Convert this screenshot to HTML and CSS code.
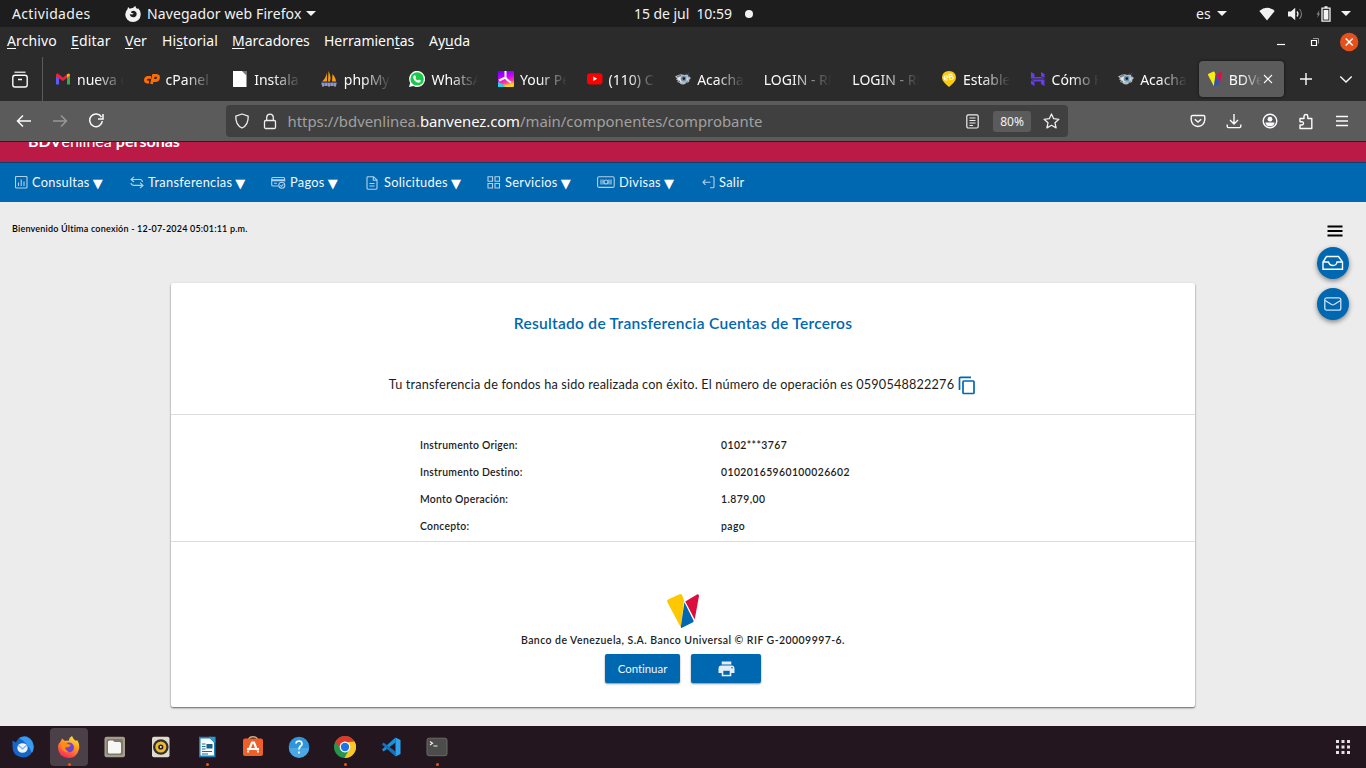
FILE: index.html
```html
<!DOCTYPE html>
<html lang="es">
<head>
<meta charset="utf-8">
<title>BDVenlínea personas</title>
<link rel="stylesheet" href="styles.css">
</head>
<body>
<svg class="defs" width="0" height="0">
  <symbol id="i-eye" viewBox="0 0 16 16">
    <path d="M0 5.500L3 4l3-.8L10 4l2-1 1.500 2L16 7l-1.500 1.500L14 11l-2.500 1L9 13.500l-3-.3-2-1.700-2-.5 1-1.500-2-1 1-1z" fill="#b4bbc1"/>
    <path d="M2.500 7.500Q8 3.500 13.500 8 9 12 5 10.500z" fill="#e8edf0"/>
    <circle cx="8.600" cy="7.800" r="3" fill="#6d93ae"/><circle cx="8.800" cy="7.600" r="1.300" fill="#111827"/>
    <path d="M2 5.500l4-1M3 11l2-1M10.500 12l2-1.500" stroke="#596066" stroke-width=".9"/>
    <path d="M11 2l1 2M14 1.500l-1 2.500M15 4.500l-1.500 1" stroke="#37417e" stroke-width="1"/>
  </symbol>
  <symbol id="i-bdv" viewBox="0 0 34 36">
    <path d="M1 8.500Q1 7 2.500 6.200L13.500 1.200Q15 .7 16 2L18 7.500 15 33.500 14 33z" fill="var(--a)"/>
    <path d="M18.400 9.200L27.500 27.500Q28 28.500 27 29.300L15.500 35q-.7 0-.7-1z" fill="var(--b)"/>
    <path d="M19.300 8.500L31 1.400Q33 .8 33 3L28.700 26.500z" fill="var(--c)"/>
  </symbol>
</svg>

<header class="sysbar">
  <span class="sys-act">Actividades</span>
  <svg class="sys-ff" width="16" height="16" viewBox="0 0 16 16"><path d="M2.500 3.200L3 1l1.800 1.800Q6.500 1.800 8 2 9 .3 10.500 0 10.300 1.800 12.300 3l.8-.7Q16 5 15.700 8.800A7.700 7.300 0 0 1 .3 8.500Q.2 5.200 2.500 3.200z" fill="#f2f2f2"/><path d="M6.500 5.200Q9.800 4 11.400 6.500 12.500 10 9.200 11.200 5.400 11.600 4.700 8.200L7.500 8.500 8.600 7.400 6 6.700z" fill="#1d1d1d"/></svg>
  <span class="sys-app">Navegador web Firefox</span><i class="tri"></i>
  <span class="sys-date">15 de jul&nbsp; 10:59</span><i class="dot"></i>
  <span class="sys-lang">es</span><i class="tri"></i>
  <svg class="sys-wifi" width="16" height="14" viewBox="0 0 16 14"><path d="M8 13.500L.3 4Q8-2.300 15.700 4z" fill="#f2f2f2"/></svg>
  <svg class="sys-vol" width="15" height="14" viewBox="0 0 15 14"><path d="M0 4.500h3L7.200.7v12.600L3 9.500H0z" fill="#f2f2f2"/><path d="M9 4.500q2 2.500 0 5" fill="none" stroke="#eee" stroke-width="1.300"/><path d="M11.500 2q4 5 0 10" fill="none" stroke="#777" stroke-width="1.200"/></svg>
  <svg class="sys-bat" width="15" height="16" viewBox="0 0 15 16"><path d="M3.500 4L.6 8.500H2L1.300 12 4 7.500H2.700z" fill="#888"/><path d="M6 2.200h8v13H6zM8.500 .9h3" fill="none" stroke="#f2f2f2" stroke-width="1.300"/><path d="M7.600 3.900h4.800v9.700H7.600z" fill="#f2f2f2"/></svg>
  <i class="tri"></i>
</header>

<nav class="menubar">
  <span class="mb1"><u>A</u>rchivo</span><span class="mb2"><u>E</u>ditar</span><span class="mb3"><u>V</u>er</span><span class="mb4">Hi<u>s</u>torial</span><span class="mb5"><u>M</u>arcadores</span><span class="mb6">Herramien<u>t</u>as</span><span>Ay<u>u</u>da</span>
  <svg class="winctl" width="90" height="20" viewBox="0 0 90 20"><path d="M4 12.500h8" stroke="#fff" stroke-width="1.200"/><path d="M40 6.500h5.500v5" fill="none" stroke="#999"/><path d="M38.500 8.500h5v5h-5z" fill="none" stroke="#fff" stroke-width="1.200"/><circle cx="76.200" cy="10" r="9.200" fill="#e6501b"/><path d="M72.700 6.500l7 7m0-7l-7 7" stroke="#fff" stroke-width="1.500"/></svg>
</nav>

<div class="tabs">
  <div class="tabview"><svg width="18" height="18" viewBox="0 0 18 18" fill="none" stroke="#fbfbfe" stroke-width="1.400"><path d="M3.500 1.200h11" stroke-width="1.200"/><path d="M4 4.200h10q2.200 0 2.200 2.200v7.400q0 2.200-2.200 2.200H4q-2.200 0-2.200-2.200V6.400Q1.800 4.200 4 4.200zM7 8.500h4" /></svg></div>
  <div class="tab"><svg width="16" height="16" viewBox="0 0 16 16"><path d="M1 4.500v9h3V7z" fill="#5b5bf5"/><path d="M12 7v6.500h3v-9z" fill="#34a853"/><path d="M1 4Q1 2 3 2.500L8 6.500 12 3.200V7L8 10 1 5.500z" fill="#ea2335"/><path d="M12 3.200q3-1.700 3 1.300L12 7z" fill="#fbbc04"/></svg><span>nueva c</span></div>
  <div class="tab"><svg width="16" height="16" viewBox="0 0 16 16" fill="none" stroke="#ff6c00" stroke-width="2.800"><path d="M7 6.300H4.200Q1.500 6.500 1.400 9q0 2 2.200 2H5M7.500 13l2-8.700h2.800q2.500.4 2.200 2.500-.3 2.400-2.600 2.700H9"/></svg><span>cPanel</span></div>
  <div class="tab"><svg width="16" height="16" viewBox="0 0 16 16"><path d="M1 0h9.500l4 4v12H1z" fill="#fff"/><path d="M10 0h5v5z" fill="#777"/></svg><span>Instala</span></div>
  <div class="tab"><svg width="17" height="16" viewBox="0 0 17 16"><path d="M6 1.500Q5 7 1 10.500h5zM7.500 0q3 6 1.500 10.500H7zM11.500 3q3.500 4 3.500 7.500h-4z" fill="#f89c0e"/><path d="M0 11.500h16L15 15H1z" fill="#6c78af"/><path d="M2 12v4m3-4v3m3-3v4m3-4v3m3-3v4" stroke="#c7cce4" stroke-width=".8"/></svg><span>phpMyA</span></div>
  <div class="tab"><svg width="16" height="16" viewBox="0 0 16 16"><path d="M0 16l1.200-4A8 8 0 1 1 4.300 15z" fill="#fff"/><circle cx="8.100" cy="7.900" r="6.700" fill="#18c94a"/><path d="M5 4.500l1.200-.2 1 2-.8 1Q7.300 9 9 9.600l1-1 1.900.9q0 2.300-2.300 2.300Q5.300 11 4.300 7 4 5.300 5 4.500z" fill="#fff"/></svg><span>WhatsA</span></div>
  <div class="tab"><svg width="16" height="16" viewBox="0 0 16 16"><defs><linearGradient id="g1" x1="0" y1="0" x2=".3" y2="1"><stop offset="0" stop-color="#6a00ff"/><stop offset=".45" stop-color="#c300ff"/><stop offset=".8" stop-color="#ff3c9e"/><stop offset="1" stop-color="#ffd21c"/></linearGradient></defs><rect width="16" height="16" rx="1" fill="url(#g1)"/><path d="M0 11l4 2 3 3H0z" fill="#20d5e8"/><path d="M7.500 0v6.500L1 9.500M7.500 6.500Q8 8.500 13 11.500" fill="none" stroke="#fff" stroke-width="2"/></svg><span>Your Pe</span></div>
  <div class="tab"><svg width="16" height="16" viewBox="0 0 16 16"><rect y="2.200" width="15.500" height="11.300" rx="3" fill="#f00"/><path d="M6.300 5.500v4.600L10.200 7.800z" fill="#fff"/></svg><span>(110) C</span></div>
  <div class="tab"><svg width="16" height="16"><use href="#i-eye"/></svg><span>Acacha</span></div>
  <div class="tab noicon"><span>LOGIN - RP</span></div>
  <div class="tab noicon"><span>LOGIN - RP</span></div>
  <div class="tab"><svg width="16" height="16" viewBox="0 0 16 16"><path d="M8 16Q1 10.500 1 6.500 1.300.3 8 0q6.700.3 7 6.500Q15 10.500 8 16z" fill="#ffca0a"/><g transform="rotate(-12 8 6.500)"><path d="M3 6.500h4Q7 4.200 5 4.200T3 6.500q.3 2.300 3.500 2M8.500 3.500v5.300H11q2.300-1.200 0-2.800H8.500 10.500q2-1.300 0-2.500H8" fill="none" stroke="#fff" stroke-width="1"/></g></svg><span>Estable</span></div>
  <div class="tab"><svg width="16" height="16" viewBox="0 0 16 16" fill="#673de6"><path d="M1 7.500V1l3.500 2v3H11l3.500 1.500zM11 5V1l3.500 2v4zM1 8.500h13.500V15L11 13v-2.500H4.500zM1 9.500L4.500 11v4L1 13z"/></svg><span>Cómo H</span></div>
  <div class="tab"><svg width="16" height="16"><use href="#i-eye"/></svg><span>Acacha</span></div>
  <div class="tab active"><svg class="logo-fav" width="16" height="16" viewBox="0 0 16 16"><use href="#i-bdv"/></svg><span>BDVe</span><svg class="tabx" width="10" height="10" viewBox="0 0 10 10"><path d="M1 1l8 8M9 1L1 9" stroke="#fbfbfe" stroke-width="1.100"/></svg></div>
  <svg class="newtab" width="14" height="14" viewBox="0 0 14 14"><path d="M7 1v12M1 7h12" stroke="#fbfbfe" stroke-width="1.400"/></svg>
  <svg class="alltabs" width="14" height="14" viewBox="0 0 14 14"><path d="M1.300 4.500L7 10l5.700-5.500" fill="none" stroke="#fbfbfe" stroke-width="1.400"/></svg>
</div>

<div class="toolbar">
  <svg class="nav-ic" width="90" height="16" viewBox="0 0 90 16" fill="none" stroke-width="1.500"><path d="M15 8H2M7 2.500L1.500 8 7 13.500" stroke="#fbfbfe"/><path d="M37 8h13M45 2.500L50.500 8 45 13.500" stroke="#989898"/><path d="M85.500 4.200A6.300 6.300 0 1 0 86.300 8M87 1v5h-5" stroke="#fbfbfe"/></svg>
  <div class="urlbar">
    <svg class="shield" width="16" height="16" viewBox="0 0 16 16"><path d="M8 1l6.200 2.200Q14.500 12 8 15 1.500 12 1.800 3.200z" fill="none" stroke="#eee" stroke-width="1.300" stroke-linejoin="round"/></svg>
    <svg class="lock" width="14" height="17" viewBox="0 0 14 17" fill="none" stroke="#eee" stroke-width="1.300"><rect x="1.500" y="7.500" width="11" height="8" rx="1.300"/><path d="M3.700 7V4.300Q4 1.200 7 1.200t3.300 3.100V7"/></svg>
    <span class="url">https://bdvenlinea.<b>banvenez.com</b>/main/componentes/comprobante</span>
    <svg class="reader" width="13" height="15" viewBox="0 0 13 15" fill="none" stroke="#eee" stroke-width="1.200"><rect x=".8" y=".8" width="11.400" height="13.200" rx="1.500"/><path d="M3.500 4h6M3.500 6.500h6M3.500 9h6M3.500 11.500h3.500"/></svg>
    <span class="zoom">80%</span>
    <svg width="17" height="16" viewBox="0 0 17 16"><path d="M8.500 1l2.200 4.700 5.200.6-3.900 3.500 1.100 5.100-4.600-2.600-4.600 2.600L5 9.800 1.100 6.300l5.200-.6z" fill="none" stroke="#eee" stroke-width="1.300" stroke-linejoin="round"/></svg>
  </div>
  <div class="tools">
    <svg width="16" height="16" viewBox="0 0 16 16" fill="none" stroke="#fbfbfe" stroke-width="1.400"><path d="M2.500 2.500h11q1.300 0 1.300 1.300V7Q14 13 8 13.500 2 13 1.200 7V3.800q0-1.300 1.300-1.300z"/><path d="M4.800 6.200L8 9l3.200-2.800"/></svg>
    <svg width="16" height="16" viewBox="0 0 16 16" fill="none" stroke="#fbfbfe" stroke-width="1.400"><path d="M8 1v10M4 7l4 4 4-4M1.200 11.500v1.800q0 1.300 1.300 1.300h11q1.300 0 1.300-1.300v-1.800"/></svg>
    <svg width="16" height="16" viewBox="0 0 16 16"><circle cx="8" cy="8" r="6.800" fill="none" stroke="#fbfbfe" stroke-width="1.400"/><circle cx="8" cy="6.200" r="2.400" fill="#fbfbfe"/><path d="M3.500 9.500h9q0 3.500-4.500 3.800-4.500-.3-4.500-3.800z" fill="#fbfbfe"/></svg>
    <svg width="16" height="17" viewBox="0 0 16 17" fill="none" stroke="#fbfbfe" stroke-width="1.400"><path d="M2 15.500V12h2q1.500-.2 1.500-1.700T4 8.700H2V5.500h4V3.200Q6.200 1.500 8 1.500t1.800 1.700v2.300h4v10z" stroke-linejoin="round"/></svg>
    <svg width="14" height="14" viewBox="0 0 14 14"><path d="M1 2.500h12M1 7h12M1 11.500h12" stroke="#fbfbfe" stroke-width="1.300"/></svg>
  </div>
</div>

<main class="page">
  <div class="brand"><span><b>BDV</b>enlínea <b>personas</b></span></div>
  <nav class="mainnav">
    <a class="n1"><svg width="13" height="13" viewBox="0 0 13 13"><rect x=".5" y=".5" width="11.500" height="11.500" rx="1"/><path d="M3.500 10V6.500M6.200 10V3.500M9 10V5.500"/></svg>Consultas<i>▼</i></a>
    <a class="n2"><svg width="14" height="13" viewBox="0 0 14 13"><path d="M4 .8L1 3.500 4 6M1 3.500h9.500Q12.500 4 12.500 6M10 6.700l3 2.700-3 2.600M13 9.400H3.500Q1 9 1 7"/></svg>Transferencias<i>▼</i></a>
    <a class="n3"><svg width="15" height="13" viewBox="0 0 15 13"><path d="M7.500 10H2Q.7 10 .7 8.700V3Q.7 1.500 2 1.500h10.500Q13.700 1.500 13.700 3v2.500M1 3.700h12.500M1 4.700h12.500M3 7.300h3"/><circle cx="10.800" cy="9.200" r="3"/><path d="M9.300 9.300l1.200 1 1.800-2"/></svg>Pagos<i>▼</i></a>
    <a class="n4"><svg width="12" height="14" viewBox="0 0 12 14"><path d="M1 1.500Q1 .7 2 .7h5.500L11 4v8.300q0 .9-1 .9H2q-1 0-1-.9zM7.300 1v3.300H11M3.500 7.500h5M3.500 10h5"/></svg>Solicitudes<i>▼</i></a>
    <a class="n5"><svg width="14" height="13" viewBox="0 0 14 13"><path d="M1 .7h4.500v4.500H1zM8 .7h4.500v4.500H8zM1 7.500h4.500V12H1zM8 7.500h4.500V12H8z"/></svg>Servicios<i>▼</i></a>
    <a class="n6"><svg width="18" height="13" viewBox="0 0 18 13"><rect x=".6" y=".8" width="16.600" height="10.600" rx="1.500"/><circle cx="9" cy="6" r="2"/><path d="M4 3.500v5M14 3.500v5M6 3.500v5M12 3.500v5"/></svg>Divisas<i>▼</i></a>
    <a class="n7"><svg width="13" height="13" viewBox="0 0 13 13"><path d="M8 .8h3q1 0 1 1v8.900q0 1-1 1H8M8.500 6.300H1M3.500 3.700L1 6.300l2.500 2.500"/></svg>Salir</a>
  </nav>
  <div class="welcome"><span>Bienvenido Última conexión - 12-07-2024 05:01:11 p.m.</span></div>
  <aside class="side">
    <svg class="burger" width="16" height="12" viewBox="0 0 16 12"><path d="M.5 1.500h15M.5 6h15M.5 10.500h15" stroke="#000" stroke-width="1.800"/></svg>
    <span class="fab"><svg width="22" height="16" viewBox="0 0 22 16" fill="none" stroke="#fff" stroke-width="1.400"><path d="M1 7L4.500 1.500h12L20.500 7v7.300H1zM1 7h5.500Q7.500 10.500 11 10.500T15 7h5.500"/></svg></span>
    <span class="fab"><svg width="18" height="14" viewBox="0 0 18 14" fill="none" stroke="#cfe3f2" stroke-width="1.300"><rect x=".8" y=".8" width="16" height="12.400" rx="2"/><path d="M1.200 3.500L7.500 7.500q1.300.7 2.600 0L16.500 3.500"/></svg></span>
  </aside>

  <section class="card">
    <h1>Resultado de Transferencia Cuentas de Terceros</h1>
    <p class="msg"><span>Tu transferencia de fondos ha sido realizada con éxito. El número de operación es 0590548822276</span><svg width="18" height="19" viewBox="0 0 18 19" fill="none" stroke="#0067b1" stroke-width="1.700"><path d="M1.500 14V2.300q0-1 1-1H13"/><rect x="5" y="5" width="11" height="12.500" rx=".8"/></svg></p>
    <dl class="rows">
      <dt>Instrumento Origen:</dt><dd>0102***3767</dd>
      <dt>Instrumento Destino:</dt><dd>01020165960100026602</dd>
      <dt>Monto Operación:</dt><dd>1.879,00</dd>
      <dt>Concepto:</dt><dd>pago</dd>
    </dl>
    <div class="foot">
      <svg class="logo-bdv" width="34" height="36"><use href="#i-bdv"/></svg>
      <p>Banco de Venezuela, S.A. Banco Universal © RIF G-20009997-6.</p>
      <div class="btns">
        <button class="b1">Continuar</button>
        <button class="b2"><svg width="17" height="16" viewBox="0 0 17 16"><path d="M3.700.5h9.600v3H3.700zM3 4.500h11q2.500.2 2.500 2.700V12H.5V7.200Q.5 4.700 3 4.500z" fill="#e3eef6"/><path d="M3.700 8.500h9.600v6.800H3.700z" fill="#e3eef6"/><path d="M5.300 9.800h6.400v4H5.300z" fill="#0067b1"/><circle cx="14" cy="6.800" r=".8" fill="#0067b1"/></svg></button>
      </div>
    </div>
  </section>
</main>

<footer class="dock">
  <div class="app"><svg width="24" height="24" viewBox="0 0 24 24"><path d="M1.500 5.500l3.500 2Q8 0 16 1.500q7 3 6.500 11Q21 22.500 11.500 22.500 1 21 1.500 11z" fill="#1467c8"/><path d="M8 3Q15-1 20 5t1 13Q17 8 8 3z" fill="#3a9cf0"/><ellipse cx="11.500" cy="13" rx="5.200" ry="4.800" fill="#eef5fc"/><path d="M7 10l4.500 4L16 10" fill="none" stroke="#7ab2e6" stroke-width="1.200"/></svg></div>
  <div class="app on run"><svg width="24" height="24" viewBox="0 0 24 24"><defs><linearGradient id="g2" x1=".8" y1="0" x2=".3" y2="1"><stop offset="0" stop-color="#ffe93e"/><stop offset=".45" stop-color="#ff9420"/><stop offset="1" stop-color="#ff2260"/></linearGradient></defs><path d="M4 6l1-2.500L8 6q2-.8 3.500 0Q12 2.500 15 1q1 3 4 5l1-1q3 4 2 9-2 9-10.500 9Q1 22 1 12q.5-4 3-6z" fill="url(#g2)"/><circle cx="12" cy="12.500" r="5" fill="#7045c9"/><path d="M4 8q4-2 7 1l3 1-2 2-4 .5Q9 16 13 17.500 7 18 4 13z" fill="#ff8a16"/></svg></div>
  <div class="app"><svg width="22" height="22" viewBox="0 0 22 22"><rect x=".5" y=".8" width="20.500" height="20.500" rx="2" fill="#a49d8b"/><rect x="2.500" y="3" width="16.500" height="16" rx="2" fill="#7f7969"/><path d="M4 6q0-1.500 1.500-1.500H9L10.500 6h5q1.500 0 1.500 1.500V16q0 1.500-1.500 1.500h-10Q4 17.500 4 16z" fill="#f7f7f5"/></svg></div>
  <div class="app"><svg width="20" height="22" viewBox="0 0 20 22"><rect x="1" y=".7" width="17.500" height="20.600" rx="2" fill="#dedbd2"/><circle cx="9.800" cy="11" r="7.800" fill="#33302c"/><circle cx="9.800" cy="11" r="5.500" fill="#f0b92a"/><circle cx="9.800" cy="11" r="2.600" fill="#222"/><circle cx="9.800" cy="11" r="1" fill="#eee"/></svg></div>
  <div class="app run"><svg width="20" height="22" viewBox="0 0 20 22"><path d="M2 .8h12l4.500 4.500v16H2z" fill="#1a7fb8"/><path d="M3.500 2.500h9.500l4 4v13H3.500z" fill="#f5fafc"/><path d="M12 .8h6.500v6z" fill="#2d9bd0"/><path d="M5 8h3.500M5 10.500h3.500M5 13h3.500M5 15.500h10M5 18h6" stroke="#1c6e9e" stroke-width="1.200"/><rect x="9.500" y="8" width="6" height="4.500" fill="#1d5d85"/></svg></div>
  <div class="app"><svg width="22" height="22" viewBox="0 0 22 22"><path d="M6.500 4Q7 .8 11 .8t4.500 3.200" fill="none" stroke="#c9b18a" stroke-width="1.500"/><rect x="1" y="2.500" width="20" height="17.500" rx="2" fill="#ef6029"/><path d="M7 14L10 6.500h2l3 7.500M5 13h12" fill="none" stroke="#fff" stroke-width="2.200"/><path d="M6 14.500v2M16 14.500v2" stroke="#fff" stroke-width="2"/></svg></div>
  <div class="app"><svg width="22" height="22" viewBox="0 0 22 22"><circle cx="11" cy="11" r="10.300" fill="#2f95dc"/><path d="M1 12a10 10 0 0 0 20 0z" fill="#4aa9e4"/><path d="M8 7.500Q8.200 5 11 5t3 2.700Q14 9.300 12.200 10.500 11 11.500 11 13.500M11 15.500v2" fill="none" stroke="#fff" stroke-width="1.700"/></svg></div>
  <div class="app run"><svg width="22" height="22" viewBox="0 0 22 22"><circle cx="11" cy="11" r="11" fill="#27964b"/><path d="M1.500 5.500A11 11 0 0 1 20.500 5.500H11L6.500 13z" fill="#e0372b"/><path d="M20.500 5.500A11 11 0 0 1 10.500 22L16 12 14 6z" fill="#fcc625"/><circle cx="11" cy="11" r="5.400" fill="#fff"/><circle cx="11" cy="11" r="4.200" fill="#1f73e8"/></svg></div>
  <div class="app"><svg width="20" height="20" viewBox="0 0 20 20"><path d="M14.500.5L1 12.500l1.500 2L14.500 5.500z" fill="#1d8fd8"/><path d="M2.500 5.500L1 7.500l13.500 12v-5z" fill="#0f74bf"/><path d="M14.500.5L19.500 3v14l-5 2.500z" fill="#2ba3ee"/></svg></div>
  <div class="app run"><svg width="22" height="20" viewBox="0 0 22 20"><rect x="1" y="1.200" width="20" height="17.500" rx="2" fill="#4c4c4a" stroke="#6a6a66"/><path d="M4 4.500l2.500 1.700L4 8M7.500 9h4" fill="none" stroke="#eee" stroke-width="1.200"/></svg></div>
  <svg class="grid9" width="15" height="15" viewBox="0 0 15 15"><path d="M0 0h3v3H0zM5.500 0h3v3h-3zM11 0h3v3h-3zM0 5.500h3v3H0zM5.500 5.500h3v3h-3zM11 5.500h3v3h-3zM0 11h3v3H0zM5.500 11h3v3h-3zM11 11h3v3h-3z" fill="#e4e0e3"/></svg>
</footer>
</body>
</html>
```
FILE: styles.css
```css
* { box-sizing: border-box; }
body {
  margin: 0;
  width: 1366px;
  height: 768px;
  overflow: hidden;
  display: flex;
  flex-direction: column;
  font-family: "Noto Sans", "Open Sans", sans-serif;
  font-size: 14px;
  color: #f2f2f2;
}
svg { display: block; flex: none; }
.defs { position: absolute; }
.logo-fav { --a: #f7ec13; --b: #2f53b5; --c: #d8104f; }
.logo-bdv { --a: #fdc800; --b: #0067b1; --c: #db0e3c; }

/* system bar */
.sysbar { height: 27px; flex: none; background: #1d1d1d; display: flex; align-items: center; padding-left: 12px; white-space: nowrap; }
.sys-act { width: 113px; letter-spacing: .35px; }
.sys-app { width: 159px; margin-left: 6px; letter-spacing: .1px; }
.tri { width: 0; height: 0; border: 5px solid transparent; border-top-color: #f2f2f2; border-bottom: 0; }
.sys-date { margin-left: 318px; width: 111px; letter-spacing: -.05px; }
.dot { width: 8px; height: 8px; border-radius: 50%; background: #f2f2f2; }
.sys-lang { margin-left: 443px; width: 21px; }
.sys-wifi { margin-left: 32px; }
.sys-vol { margin-left: 13px; }
.sys-bat { margin-left: 13px; margin-right: 10px; }

/* menu bar */
.menubar { height: 30px; flex: none; background: #2b2b2b; display: flex; align-items: center; padding: 0 0 2px 7px; color: #fbfbfe; }
.menubar span { margin-top: -1px; }
.menubar u { text-underline-offset: 2px; text-decoration-thickness: 1px; }
.mb1 { width: 64px; letter-spacing: .1px; }
.mb2 { width: 54px; letter-spacing: .15px; }
.mb3 { width: 37px; }
.mb4 { width: 70px; letter-spacing: .1px; }
.mb5 { width: 92px; }
.mb6 { width: 105px; }
.winctl { margin: 2px 3px 0 auto; }

/* tab strip */
.tabs { height: 44px; flex: none; background: #2b2b2b; display: flex; align-items: center; color: #fbfbfe; }
.tabview { width: 43px; height: 44px; margin-right: 4px; padding: 14px 0 0 11px; border-right: 1px solid #5b5b5b; flex: none; }
.tab { width: 88.600px; height: 36px; flex: none; display: flex; align-items: center; padding-left: 8px; }
.tab span { width: 48px; margin-left: 6px; overflow: hidden; white-space: nowrap; mask-image: linear-gradient(90deg, #000 40%, transparent 98%); }
.tab.noicon span { width: 69px; margin-left: 0; }
.tab.active { width: 85px; background: #5b5b5b; border-radius: 4px; box-shadow: 0 0 3px #111; }
.tab.active span { width: 34px; }
.newtab { margin-left: 15px; }
.alltabs { margin-left: auto; margin-right: 13px; }

/* toolbar */
.toolbar { height: 41px; flex: none; background: #5b5b5b; border-bottom: 1px solid #222; display: flex; align-items: center; padding-left: 16px; }
.nav-ic { margin-right: 120px; }
.urlbar { width: 842px; height: 32px; border-radius: 4px; background: #404040; display: flex; align-items: center; padding: 0 8px; }
.lock { margin-left: 13px; }
.url { margin-left: 10px; width: 681px; padding-left: .500px; font-size: 14.900px; color: #a0a0a0; white-space: nowrap; }
.url b { font-weight: 400; color: #fbfbfe; letter-spacing: -.1px; }
.zoom { width: 38px; height: 21px; margin: 0 12px 0 14px; border-radius: 3px; background: #5b5b5b; font-size: 12px; line-height: 21px; text-align: center; }
.tools { display: flex; align-items: center; gap: 20.300px; margin-left: 121.500px; }

/* bank page */
.page { height: 584px; flex: none; position: relative; background: #ececec; overflow: hidden; font-family: Lato, "Open Sans", sans-serif; font-variant-ligatures: none; color: #1c1c1c; }
.brand { height: 20px; background: #bb1a47; display: flex; align-items: flex-end; padding: 0 0 10px 28px; color: #fff; font-size: 16px; line-height: 20px; overflow: hidden; }
.brand span { margin-bottom: 1px; }
.mainnav { height: 40px; background: #0067b1; border-top: 1px solid #07436f; display: flex; align-items: center; padding: 0 0 2px 15px; color: #f3f8fb; font-size: 12.800px; letter-spacing: .3px; }
.mainnav a { display: flex; align-items: center; height: 20px; white-space: nowrap; }
.mainnav svg { fill: none; stroke: #b2d2e9; stroke-width: 1.100; margin: 2px 4px 0 0; }
.mainnav .n4 svg { margin-right: 6px; }
.mainnav i { font: 13px/14px "DejaVu Sans", sans-serif; letter-spacing: 0; color: #fff; margin: 4px 0 0 3px; }
.n1 { width: 115px; }
.n2 { width: 141px; }
.n3 { width: 95px; }
.n4 { width: 121px; }
.n5 { width: 110px; }
.n6 { width: 105px; }
.welcome { padding: 20px 0 0 12px; font-size: 9px; line-height: 14px; font-weight: 600; color: #000; letter-spacing: .2px; }
.side { position: absolute; right: 17px; top: 83px; display: flex; flex-direction: column; align-items: center; }
.burger { margin: 0 0 10px 4px; }
.fab { width: 32px; height: 32px; border-radius: 50%; background: #0067b1; box-shadow: 0 2px 5px rgba(0, 0, 0, .45); display: flex; align-items: center; justify-content: center; margin-bottom: 9px; }

.card { width: 1024px; height: 424px; margin: 47px 0 0 171px; background: #fff; box-shadow: 0 1px 2px rgba(0, 0, 0, .6); border-radius: 2px; overflow: hidden; }
.card h1 { margin: 29px 0 1px; font-size: 15.500px; line-height: 22px; font-weight: 600; color: #0067b1; text-align: center; letter-spacing: .29px; }
.msg { height: 80px; margin: 0; padding: 40px 0 0; display: flex; justify-content: center; align-items: flex-start; gap: 4px; font-size: 12.700px; line-height: 19px; letter-spacing: .17px; border-bottom: 1px solid #ddd; }
.msg svg { margin: 1px 1px 0 0; }
.rows { height: 127px; margin: 0; padding: 17px 0 0 249px; display: grid; grid-template-columns: 301px 1fr; grid-auto-rows: 27px; font-size: 10.400px; line-height: 27px; font-weight: 600; border-bottom: 1px solid #ddd; letter-spacing: .25px; }
.rows dd { margin: 0; letter-spacing: .42px; }
.foot { display: flex; flex-direction: column; align-items: center; padding-top: 51px; }
.foot p { margin: 3px 0 6px; font-size: 10.500px; line-height: 16px; font-weight: 600; letter-spacing: .44px; }
.btns { display: flex; gap: 11px; }
.btns button { height: 29px; border: 0; border-radius: 2px; background: #0067b1; box-shadow: 0 1px 2px rgba(0, 0, 0, .45); padding: 0; color: #f0f6fa; font: 11.400px Lato, sans-serif; font-variant-ligatures: none; display: flex; align-items: center; justify-content: center; }
.b1 { width: 75px; }
.b2 { width: 70px; }

/* dock */
.dock { height: 42px; flex: none; background: #24161f; display: flex; align-items: center; }
.app { width: 46px; height: 42px; position: relative; display: flex; align-items: center; justify-content: center; }
.on::before { content: ""; position: absolute; inset: 2px 4px; border-radius: 4px; background: #4c4048; }
.app svg { position: relative; }
.run::after { content: ""; position: absolute; left: 21.500px; bottom: 2px; width: 3px; height: 3px; border-radius: 50%; background: #e95420; }
.grid9 { margin-left: auto; margin-right: 15px; }
```
